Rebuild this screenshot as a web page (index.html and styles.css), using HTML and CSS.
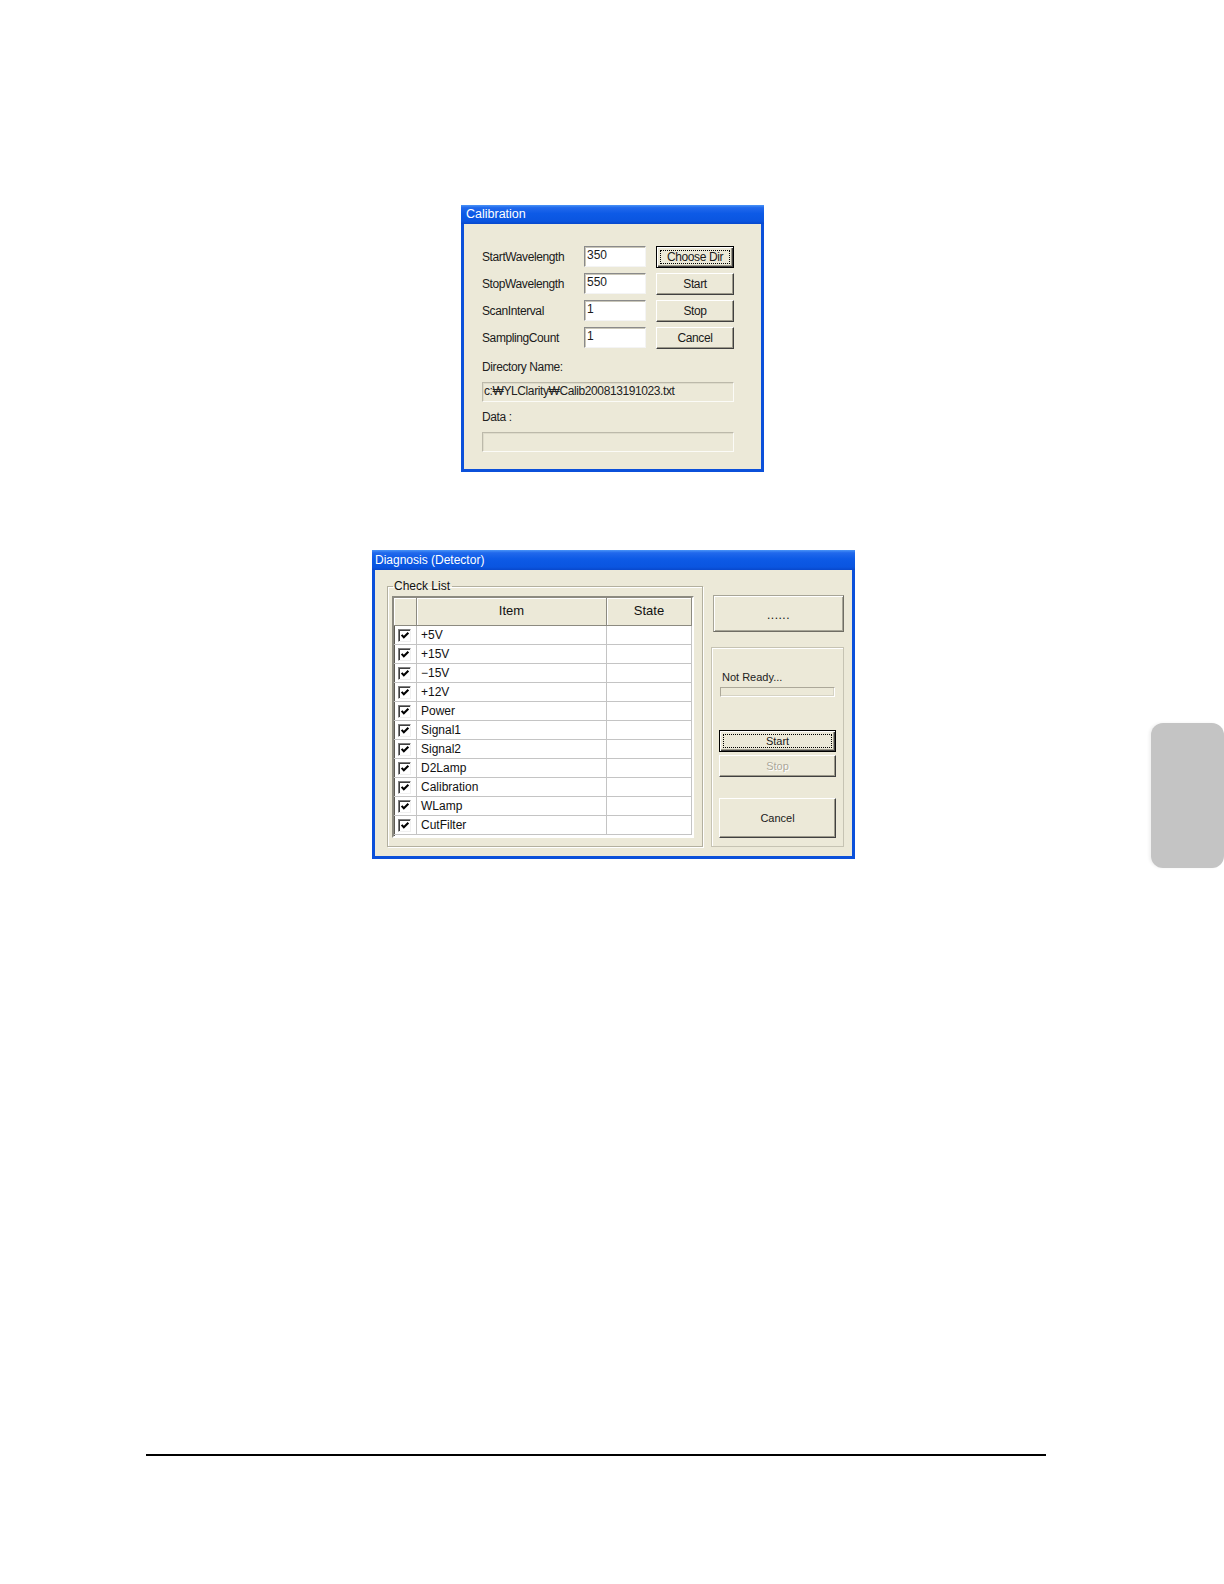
FILE: index.html
```html
<!DOCTYPE html>
<html lang="en">
<head>
<meta charset="utf-8">
<title>Calibration / Diagnosis</title>
<link rel="stylesheet" href="styles.css">
</head>
<body>
<div class="page">
  <div class="win win-cal">
    <div class="titlebar">Calibration</div>
    <div class="cal-body">
      <div class="cal-grid">
        <span class="lbl">StartWavelength</span>
        <div class="edit">350</div>
        <div class="btn btn-default"><span class="focus">Choose Dir</span></div>
        <span class="lbl">StopWavelength</span>
        <div class="edit">550</div>
        <div class="btn">Start</div>
        <span class="lbl">ScanInterval</span>
        <div class="edit">1</div>
        <div class="btn">Stop</div>
        <span class="lbl">SamplingCount</span>
        <div class="edit">1</div>
        <div class="btn">Cancel</div>
      </div>
      <div class="cal-caption">Directory Name:</div>
      <div class="static-field">c:₩YLClarity₩Calib200813191023.txt</div>
      <div class="cal-caption">Data :</div>
      <div class="static-field"></div>
    </div>
  </div>

  <div class="win win-diag">
    <div class="titlebar titlebar-diag">Diagnosis (Detector)</div>
    <div class="diag-body">
      <fieldset class="group">
        <legend>Check List</legend>
        <div class="list">
          <div class="list-head">
            <div class="hc hc-check"></div>
            <div class="hc hc-item">Item</div>
            <div class="hc hc-state">State</div>
          </div>
          <div class="list-row"><div class="c c-check"><span class="cb"><svg viewBox="0 0 11 11" width="11" height="11"><path d="M1.8 4.8 L4.2 7.4 L9.2 2.4" fill="none" stroke="#000" stroke-width="2.3"/></svg></span></div><div class="c c-item">+5V</div><div class="c c-state"></div></div>
          <div class="list-row"><div class="c c-check"><span class="cb"><svg viewBox="0 0 11 11" width="11" height="11"><path d="M1.8 4.8 L4.2 7.4 L9.2 2.4" fill="none" stroke="#000" stroke-width="2.3"/></svg></span></div><div class="c c-item">+15V</div><div class="c c-state"></div></div>
          <div class="list-row"><div class="c c-check"><span class="cb"><svg viewBox="0 0 11 11" width="11" height="11"><path d="M1.8 4.8 L4.2 7.4 L9.2 2.4" fill="none" stroke="#000" stroke-width="2.3"/></svg></span></div><div class="c c-item">−15V</div><div class="c c-state"></div></div>
          <div class="list-row"><div class="c c-check"><span class="cb"><svg viewBox="0 0 11 11" width="11" height="11"><path d="M1.8 4.8 L4.2 7.4 L9.2 2.4" fill="none" stroke="#000" stroke-width="2.3"/></svg></span></div><div class="c c-item">+12V</div><div class="c c-state"></div></div>
          <div class="list-row"><div class="c c-check"><span class="cb"><svg viewBox="0 0 11 11" width="11" height="11"><path d="M1.8 4.8 L4.2 7.4 L9.2 2.4" fill="none" stroke="#000" stroke-width="2.3"/></svg></span></div><div class="c c-item">Power</div><div class="c c-state"></div></div>
          <div class="list-row"><div class="c c-check"><span class="cb"><svg viewBox="0 0 11 11" width="11" height="11"><path d="M1.8 4.8 L4.2 7.4 L9.2 2.4" fill="none" stroke="#000" stroke-width="2.3"/></svg></span></div><div class="c c-item">Signal1</div><div class="c c-state"></div></div>
          <div class="list-row"><div class="c c-check"><span class="cb"><svg viewBox="0 0 11 11" width="11" height="11"><path d="M1.8 4.8 L4.2 7.4 L9.2 2.4" fill="none" stroke="#000" stroke-width="2.3"/></svg></span></div><div class="c c-item">Signal2</div><div class="c c-state"></div></div>
          <div class="list-row"><div class="c c-check"><span class="cb"><svg viewBox="0 0 11 11" width="11" height="11"><path d="M1.8 4.8 L4.2 7.4 L9.2 2.4" fill="none" stroke="#000" stroke-width="2.3"/></svg></span></div><div class="c c-item">D2Lamp</div><div class="c c-state"></div></div>
          <div class="list-row"><div class="c c-check"><span class="cb"><svg viewBox="0 0 11 11" width="11" height="11"><path d="M1.8 4.8 L4.2 7.4 L9.2 2.4" fill="none" stroke="#000" stroke-width="2.3"/></svg></span></div><div class="c c-item">Calibration</div><div class="c c-state"></div></div>
          <div class="list-row"><div class="c c-check"><span class="cb"><svg viewBox="0 0 11 11" width="11" height="11"><path d="M1.8 4.8 L4.2 7.4 L9.2 2.4" fill="none" stroke="#000" stroke-width="2.3"/></svg></span></div><div class="c c-item">WLamp</div><div class="c c-state"></div></div>
          <div class="list-row"><div class="c c-check"><span class="cb"><svg viewBox="0 0 11 11" width="11" height="11"><path d="M1.8 4.8 L4.2 7.4 L9.2 2.4" fill="none" stroke="#000" stroke-width="2.3"/></svg></span></div><div class="c c-item">CutFilter</div><div class="c c-state"></div></div>
        </div>
      </fieldset>
      <div class="side">
        <div class="dots-box">......</div>
        <div class="side-panel">
          <div class="status">Not Ready...</div>
          <div class="progress"></div>
          <div class="btn btn-default sbtn"><span class="focus">Start</span></div>
          <div class="btn sbtn disabled">Stop</div>
          <div class="btn cancel-btn">Cancel</div>
        </div>
      </div>
    </div>
  </div>

  <div class="rule"></div>
  <div class="thumb-tab"></div>
</div>
</body>
</html>
```

FILE: styles.css
```css
* { box-sizing: border-box; }

body {
  margin: 0;
  background: #fff;
  font-family: "Liberation Sans", Arial, "DejaVu Sans", sans-serif;
  color: #000;
}

.page {
  position: relative;
  width: 1224px;
  height: 1584px;
  padding-top: 205px;
  background: #fff;
  overflow: hidden;
}

/* ---------- window frame ---------- */
.win {
  background: #0b50da;
  padding: 0 3px 3px;
}

.win-cal {
  width: 303px;
  margin-left: 461px;
}

.win-diag {
  width: 483px;
  margin: 78px 0 0 372px;
}

.titlebar {
  height: 19px;
  margin: 0 -3px;
  padding-left: 5px;
  color: #fff;
  font-size: 12.5px;
  line-height: 19px;
  white-space: nowrap;
  background: linear-gradient(180deg, #4a94f7 0%, #2169ec 14%, #0d5ae6 45%, #0a55e0 85%, #0848cc 100%);
}

.titlebar-diag {
  height: 20px;
  line-height: 20px;
  padding-left: 3px;
  font-size: 12px;
}

/* ---------- calibration ---------- */
.cal-body {
  background: #ece9d8;
  height: 245px;
  padding: 22px 0 0 18px;
  font-size: 12px;
  letter-spacing: -0.4px;
}

.cal-grid {
  display: grid;
  grid-template-columns: 92px 62px 78px;
  grid-auto-rows: 22px;
  column-gap: 10px;
  row-gap: 5px;
  align-items: center;
}

.lbl {
  white-space: nowrap;
  color: #1a1a1a;
}

.edit {
  align-self: start;
  height: 21px;
  background: #fff;
  border: 1px solid;
  border-color: #8a8a8a #f4f4f4 #f4f4f4 #8a8a8a;
  box-shadow: inset 1px 1px 0 #c9c6b8;
  padding: 0 0 0 2px;
  font-size: 12px;
  line-height: 16px;
  letter-spacing: 0;
  color: #1a1a1a;
}

.btn {
  display: flex;
  align-items: center;
  justify-content: center;
  height: 22px;
  background: #ece9d8;
  border: 1px solid;
  border-color: #fff #404040 #404040 #fff;
  box-shadow: inset -1px -1px 0 #9d9a8b;
  font-size: 12px;
  color: #1a1a1a;
  white-space: nowrap;
}

.btn-default {
  border: 1px solid #000;
  box-shadow: inset 1px 1px 0 #fff, inset -1px -1px 0 #404040, inset -2px -2px 0 #9d9a8b;
  padding: 3px;
}

.focus {
  display: flex;
  align-items: center;
  justify-content: center;
  width: 100%;
  height: 100%;
  border: 1px dotted #000;
}

.cal-caption {
  margin-top: 11px;
  height: 14px;
  line-height: 14px;
  color: #222;
}

.cal-caption + .static-field {
  margin-top: 8px;
}

.static-field + .cal-caption {
  margin-top: 8px;
}

.static-field {
  width: 252px;
  height: 20px;
  background: #ece9d8;
  border: 1px solid;
  border-color: #bcb9aa #fbfbf7 #fbfbf7 #bcb9aa;
  box-shadow: inset 1px 1px 0 #dedbca;
  padding-left: 1px;
  line-height: 17px;
  color: #222;
  white-space: nowrap;
  overflow: hidden;
}

/* ---------- diagnosis ---------- */
.diag-body {
  display: flex;
  align-items: flex-start;
  gap: 8px;
  height: 286px;
  background: #ece9d8;
  padding: 9px 8px 9px 12px;
  font-size: 12px;
}

.group {
  margin: 0;
  width: 316px;
  height: 268px;
  padding: 3px 8px 7px 4px;
  border: 1px solid #b3b09f;
  box-shadow: inset 1px 1px 0 #fff, 1px 1px 0 #fff;
}

.group legend {
  margin-left: 1px;
  padding: 0 2px 0 1px;
  font-size: 12px;
  line-height: 14px;
  color: #111;
}

.list {
  width: 302px;
  height: 242px;
  background: #fff;
  border: 2px solid;
  border-color: #8c8a80 #fff #fff #8c8a80;
  box-shadow: inset 1px 1px 0 #5c5a52;
}

.list-head {
  display: flex;
  height: 28px;
}

.hc {
  background: #ece9d8;
  border-right: 1px solid #8c8a80;
  border-bottom: 1px solid #8c8a80;
  box-shadow: inset 1px 1px 0 #fff;
  display: flex;
  align-items: center;
  justify-content: center;
  padding-bottom: 2px;
  font-size: 13px;
  color: #111;
}

.hc-check, .c-check { width: 23px; flex: none; }
.hc-item, .c-item { width: 190px; flex: none; }
.hc-state, .c-state { width: 85px; flex: none; }

.list-row {
  display: flex;
  height: 19px;
}

.c {
  border-right: 1px solid #c4c4c4;
  border-bottom: 1px solid #c4c4c4;
  display: flex;
  align-items: center;
}

.c-item {
  padding-left: 4px;
  color: #111;
  white-space: nowrap;
}

.c-check {
  padding-left: 4px;
}

.cb {
  display: flex;
  align-items: center;
  justify-content: center;
  width: 13px;
  height: 13px;
  background: #fff;
  border: 1px solid;
  border-color: #808080 #f0f0f0 #f0f0f0 #808080;
  box-shadow: inset 1px 1px 0 #404040;
  padding: 1px 0 0 1px;
}

.cb svg { display: block; }

.side {
  display: flex;
  flex-direction: column;
  width: 133px;
}

.dots-box {
  margin: 16px 0 0 2px;
  width: 131px;
  height: 37px;
  display: flex;
  align-items: center;
  justify-content: center;
  padding-top: 3px;
  border: 1px solid;
  border-color: #a7a597 #6f6d64 #6f6d64 #a7a597;
  box-shadow: inset 1px 1px 0 #fff, inset -1px -1px 0 #a7a597;
  font-size: 12px;
  letter-spacing: 0.5px;
  color: #111;
}

.side-panel {
  margin-top: 15px;
  height: 200px;
  border: 1px solid #c6c3b3;
  box-shadow: inset 1px 1px 0 #fff;
  padding: 22px 0 0 0;
}

.status {
  margin-left: 10px;
  height: 14px;
  line-height: 14px;
  font-size: 11px;
  color: #222;
}

.progress {
  margin: 3px 0 0 8px;
  width: 115px;
  height: 10px;
  background: #ece9d8;
  border: 1px solid;
  border-color: #aca899 #fff #fff #aca899;
  box-shadow: inset -1px -1px 0 #d6d3c4;
}

.sbtn {
  margin: 3px 0 0 7px;
  width: 117px;
  font-size: 11px;
}

.btn-default.sbtn {
  margin-top: 33px;
}

.disabled {
  color: #aca899;
  text-shadow: 1px 1px 0 #fff;
}

.cancel-btn {
  margin: 21px 0 0 7px;
  width: 117px;
  height: 40px;
  font-size: 11px;
}

/* ---------- page furniture ---------- */
.rule {
  margin: 595px 0 0 146px;
  width: 900px;
  height: 2px;
  background: #000;
}

.thumb-tab {
  position: absolute;
  left: 1151px;
  top: 723px;
  width: 73px;
  height: 145px;
  background: #c4c4c4;
  border-radius: 12px;
  box-shadow: -2px 0 3px rgba(0, 0, 0, 0.06);
}
```
